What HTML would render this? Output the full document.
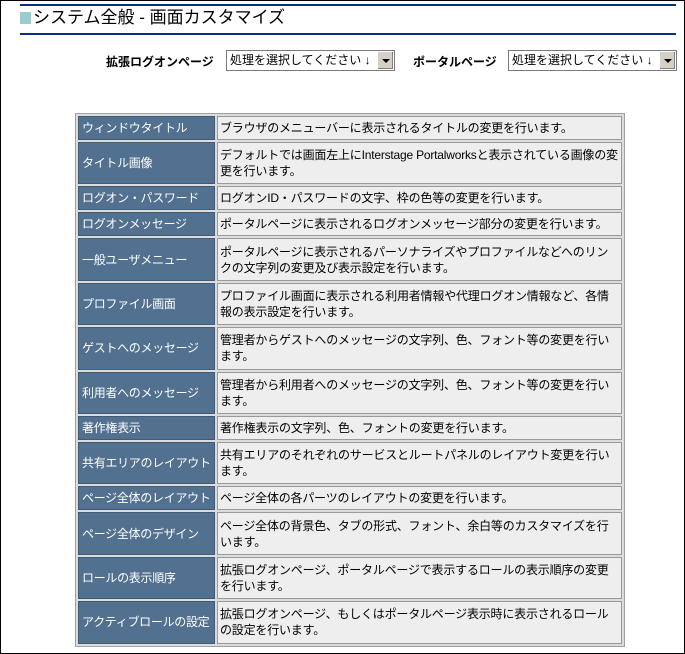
<!DOCTYPE html>
<html><head><meta charset="utf-8"><style>
body{margin:0;width:685px;height:654px;background:#fff;font-family:"Liberation Sans","Noto Sans CJK JP",sans-serif;font-size:12px;color:#000;position:relative;overflow:hidden}
.frame{position:absolute;left:0;top:0;width:683px;height:652px;border:1px solid #000}
.line{position:absolute;left:20px;width:656px;height:2px;background:#0a2f7f}
.title{position:absolute;left:20px;top:8px;font-size:17px;line-height:20px;white-space:nowrap}
.sq{display:inline-block;width:11px;height:12px;background:#99cccc;vertical-align:-1px;margin-right:2px}
.lbl{position:absolute;top:53px;font-weight:bold;font-size:12px;white-space:nowrap}
.sel{position:absolute;top:50px;width:164px;height:19px;border:1px solid #7a7a7a;background:#fff;font-size:12px;line-height:19px;padding-left:3px;box-sizing:content-box;white-space:nowrap}
.sel .b{position:absolute;right:1px;top:1px;width:15px;height:17px;background:#d4d0c8;border-left:1px solid #fff;box-shadow:inset -1px -1px #808080}
.sel .b:after{content:"";position:absolute;left:4px;top:7px;border-left:4px solid transparent;border-right:4px solid transparent;border-top:4px solid #000}
table{position:absolute;left:75px;top:113px;width:550px;table-layout:fixed;border-collapse:separate;border-spacing:2px;background:#dcdcdc;border:1px solid #a0a0a0}
td{padding:0 2px;line-height:16px;vertical-align:middle;overflow:hidden}
td.k{background:#52708f;color:#fff;border:1px solid #3f5a75;white-space:nowrap;padding-left:3px;letter-spacing:-0.3px}
td.v{background:#eeeeee;border:1px solid #9a9a9a;letter-spacing:-0.2px}
tr.s td{height:22px}
tr.d td{height:40.4px}
</style></head><body>
<div class="frame"></div>
<div class="line" style="top:4px"></div>
<div class="title"><span class="sq"></span>システム全般 - 画面カスタマイズ</div>
<div class="line" style="top:33px"></div>
<div class="lbl" style="left:106px">拡張ログオンページ</div>
<div class="sel" style="left:226px">処理を選択してください ↓<span class="b"></span></div>
<div class="lbl" style="left:413px">ポータルページ</div>
<div class="sel" style="left:508px">処理を選択してください ↓<span class="b"></span></div>
<table>
<colgroup><col style="width:137px"><col></colgroup>
<tr class="s"><td class="k">ウィンドウタイトル</td><td class="v">ブラウザのメニューバーに表示されるタイトルの変更を行います。</td></tr>
<tr class="d"><td class="k">タイトル画像</td><td class="v">デフォルトでは画面左上にInterstage Portalworksと表示されている画像の変更を行います。</td></tr>
<tr class="s"><td class="k">ログオン・パスワード</td><td class="v">ログオンID・パスワードの文字、枠の色等の変更を行います。</td></tr>
<tr class="s"><td class="k">ログオンメッセージ</td><td class="v">ポータルページに表示されるログオンメッセージ部分の変更を行います。</td></tr>
<tr class="d"><td class="k">一般ユーザメニュー</td><td class="v">ポータルページに表示されるパーソナライズやプロファイルなどへのリンクの文字列の変更及び表示設定を行います。</td></tr>
<tr class="d"><td class="k">プロファイル画面</td><td class="v">プロファイル画面に表示される利用者情報や代理ログオン情報など、各情報の表示設定を行います。</td></tr>
<tr class="d"><td class="k">ゲストへのメッセージ</td><td class="v">管理者からゲストへのメッセージの文字列、色、フォント等の変更を行います。</td></tr>
<tr class="d"><td class="k">利用者へのメッセージ</td><td class="v">管理者から利用者へのメッセージの文字列、色、フォント等の変更を行います。</td></tr>
<tr class="s"><td class="k">著作権表示</td><td class="v">著作権表示の文字列、色、フォントの変更を行います。</td></tr>
<tr class="d"><td class="k">共有エリアのレイアウト</td><td class="v">共有エリアのそれぞれのサービスとルートパネルのレイアウト変更を行います。</td></tr>
<tr class="s"><td class="k">ページ全体のレイアウト</td><td class="v">ページ全体の各パーツのレイアウトの変更を行います。</td></tr>
<tr class="d"><td class="k">ページ全体のデザイン</td><td class="v">ページ全体の背景色、タブの形式、フォント、余白等のカスタマイズを行います。</td></tr>
<tr class="d"><td class="k">ロールの表示順序</td><td class="v">拡張ログオンページ、ポータルページで表示するロールの表示順序の変更を行います。</td></tr>
<tr class="d"><td class="k">アクティブロールの設定</td><td class="v">拡張ログオンページ、もしくはポータルページ表示時に表示されるロールの設定を行います。</td></tr>
</table>
</body></html>
